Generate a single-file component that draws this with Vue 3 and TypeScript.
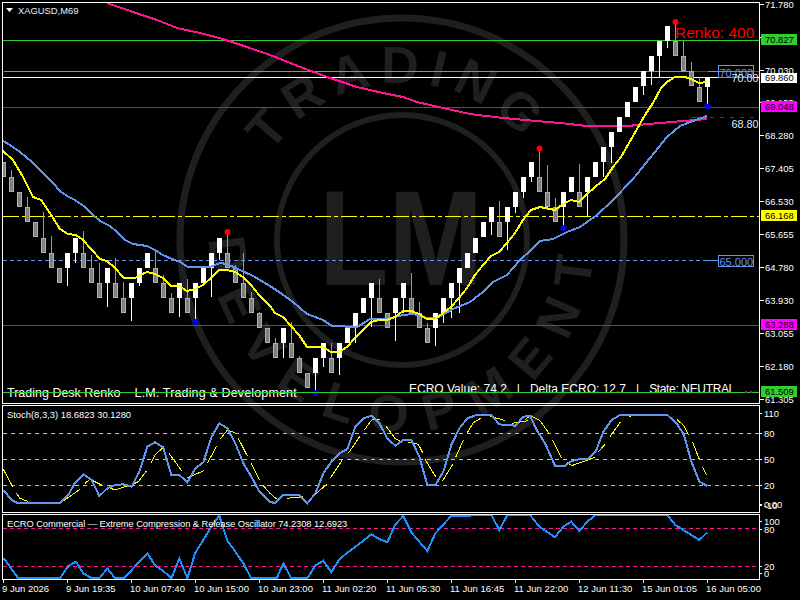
<script setup lang="ts">
type Pt = [number, number]
// [body top, up/down, wick end]
type Bar = [number, 'u' | 'd', number?]

const bars: Bar[] = [
  [162,'d'],[177,'d',170],[192,'d'],[207,'d',197],[222,'d'],[238,'d',212],[253,'d',236],[268,'d'],
  [253,'u',286],[238,'u',263],[253,'d',231],[268,'d',255],[283,'d',263],[268,'u',307],[283,'d',258],[298,'d',282],
  [283,'u',321],[268,'u',286],[253,'u'],[268,'d',250],[283,'d',275],[298,'d',293],[283,'u',317],[298,'d',279],
  [283,'u',320],[268,'u'],[253,'u',297],[238,'u',260],[253,'d',233],[268,'d',265],[283,'d',253],[298,'d',292],
  [313,'d',312],[328,'d'],[343,'d',338],[328,'u',358],[343,'d',322],[358,'d',356],[373,'d'],[358,'u',392],
  [343,'u',367],[358,'d',343],[343,'u',375],[328,'u'],[313,'u',343],[298,'u'],[283,'u',327],[298,'d',279],
  [313,'d'],[298,'u',341],[283,'u',313],[298,'d',273],[313,'d',302],[328,'d',323],[313,'u',346],[298,'u',323],
  [283,'u',318],[268,'u',313],[253,'u'],[238,'u'],[222,'u'],[207,'u',235],[222,'d',201],[207,'u',250],
  [192,'u',213],[177,'u',198],[162,'u',182],[177,'d',149],[192,'d',165],[207,'d',198],[192,'u',228],[177,'u'],
  [192,'d',164],[177,'u',216],[162,'u'],[147,'u',177],[132,'u',163],[117,'u'],[102,'u'],[87,'u'],
  [71,'u',95],[56,'u',85],[41,'u',77],[26,'u',48],[41,'d',22],[56,'d',41],[71,'d',62],[87,'d',77],[77,'u',106],
]

const candles = bars.map(([top, dir, wick], i) => {
  const x = 3 + 8 * i
  return { x, top, up: dir === 'u', wick, h: top === 77 ? 10 : 15 }
})

const yellowMa: Pt[] = [[3,151],[13,160],[23,177],[33,197],[41,200],[50,213],[60,229],[68,234],[76,235],[83,240],[92,250],[100,259],[107,261],[115,268],[124,278],[135,278],[140,275],[147,272],[155,274],[163,278],[171,286],[179,286],[187,291],[195,289],[203,285],[211,278],[219,270],[227,270],[235,272],[243,277],[251,285],[259,295],[270,306],[275,313],[283,317],[291,326],[299,335],[307,347],[323,347],[331,352],[339,352],[347,347],[355,338],[363,330],[371,322],[379,320],[387,320],[395,317],[403,311],[411,311],[419,314],[427,319],[435,319],[443,313],[451,307],[459,298],[467,288],[475,275],[483,265],[491,256],[499,252],[507,243],[515,233],[523,220],[531,210],[540,207],[555,210],[563,204],[571,200],[579,202],[587,194],[595,187],[605,179],[613,167],[621,157],[629,143],[637,129],[645,115],[653,103],[661,88],[667,82],[675,77],[685,77],[691,79],[699,83],[707,82]]
const blueMa: Pt[] = [[3,141],[10,145],[20,152],[32,162],[43,173],[53,183],[60,191],[67,196],[75,200],[85,207],[93,215],[100,221],[110,226],[117,232],[125,240],[133,244],[147,246],[155,250],[163,255],[172,259],[180,262],[188,267],[210,267],[220,263],[227,264],[240,270],[253,276],[270,286],[282,294],[293,302],[307,314],[323,320],[332,326],[357,327],[370,319],[387,319],[403,315],[413,314],[427,318],[437,318],[453,309],[470,302],[483,292],[493,282],[507,275],[520,260],[530,251],[540,241],[553,239],[567,232],[580,227],[597,215],[613,200],[633,179],[650,158],[667,137],[680,126],[693,121],[707,116]]
const pinkMa: Pt[] = [[107,3],[133,12],[157,20],[177,28],[200,33],[223,39],[247,47],[270,55],[303,68],[330,78],[357,87],[383,93],[403,97],[417,102],[443,108],[470,114],[503,118],[547,122],[560,123],[587,126],[627,126],[660,123],[683,121],[707,119]]

// zoomed pick-ups are 3x, these helpers bring them back to page pixels
const scaled = (pts: number[][], ox: number): Pt[] => pts.map(([x, y]) => [ox + x / 3, 400 + y / 3])

const stochMain: Pt[] = [
  ...scaled([[10,270],[35,300],[50,308],[180,308],[205,285],[225,248],[250,223],[275,240],[298,288],[322,265],[345,255],[370,253],[395,260],[418,215],[442,140],[465,127],[490,143],[514,225],[538,225],[562,247],[586,205],[610,187],[634,112],[658,70],[682,85],[706,130],[730,190],[754,230],[778,275],[810,305]], 0),
  ...scaled([[15,310],[40,285],[88,285],[112,310],[136,280],[160,220],[184,185],[208,160],[232,147],[256,80],[280,55],[304,47],[328,70],[352,115],[376,137],[400,120],[424,120],[448,170],[472,255],[496,255],[520,215],[544,135],[568,85],[592,55],[620,45],[664,45],[688,73],[712,75],[736,77],[760,50],[785,47]], 270),
  ...scaled([[0,47],[20,90],[45,130],[75,197],[105,197],[125,183],[150,177],[175,177],[197,155],[220,95],[245,60],[270,45],[412,45],[440,70],[462,105],[484,185],[508,245],[532,258]], 530),
]

const stochSignal: Pt[][] = [
  ...[[[10,208],[38,260]],[[50,280],[60,295],[85,305]],[[115,310],[170,310]],[[190,303],[240,268]],[[255,250],[270,238],[305,255]],[[325,262],[345,270],[385,257]],[[400,252],[415,245],[440,212]],[[452,190],[465,165],[492,140]],[[507,160],[545,212]],[[562,233],[612,212]],[[622,190],[650,138]],[[660,118],[682,90],[705,98]],[[715,115],[742,168]],[[754,190],[778,240]],[[788,255],[810,280]]].map(s => scaled(s, 0)),
  ...[[[0,280],[20,297]],[[50,295],[100,290]],[[125,292],[170,253]],[[182,233],[218,178]],[[235,160],[270,108]],[[283,90],[305,60],[330,58]],[[348,78],[375,115],[395,125]],[[415,127],[445,133],[458,158]],[[465,178],[497,230]],[[518,242],[548,193]],[[557,172],[580,120]],[[592,98],[610,68],[632,55]],[[650,45],[705,62]],[[725,70],[775,62]]].map(s => scaled(s, 270)),
  ...[[[-15,60],[0,47],[30,62],[57,100]],[[67,120],[95,175]],[[112,188],[125,197],[195,172]],[[205,155],[225,133]],[[240,110],[272,65]],[[297,50],[310,45],[415,45]],[[440,58],[462,78],[475,105]],[[488,127],[508,178]],[[517,200],[530,225]]].map(s => scaled(s, 530)),
]

const ecroLine: Pt[] = [
  ...scaled([[10,473],[55,535],[180,535],[205,498],[228,485],[250,520],[275,535],[298,535],[322,505],[345,535],[372,535],[395,510],[442,460],[466,497],[490,513],[514,535],[538,475],[562,535],[586,458],[610,420],[634,380],[658,347],[682,422],[706,455],[730,490],[754,535]], 0),
  ...scaled([[20,535],[40,490],[64,535],[112,535],[136,497],[160,482],[184,517],[208,478],[232,458],[256,440],[280,422],[304,403],[328,417],[352,427],[376,373],[400,348],[424,397],[448,425],[472,453],[496,400],[520,373],[544,348],[664,345],[688,390],[712,345],[784,345]], 270),
  ...scaled([[0,345],[28,380],[75,412],[100,380],[124,365],[148,393],[172,365],[197,345],[412,345],[436,375],[460,390],[508,420],[532,397]], 530),
]

const line = (pts: Pt[]) => pts.map(p => p.join(',')).join(' ')

const priceTicks: [string, number][] = [
  ['71.780', 5],['70.905', 38],['70.030', 71],['69.155', 103],['68.280', 136],['67.405', 169],['66.530', 202],
  ['65.655', 235],['64.780', 268],['63.930', 301],['63.055', 334],['62.180', 367],['61.305', 400],
]
const priceTags = [
  { text: '70.827', y: 34, h: 11, bg: '#32cd32' },
  { text: '69.860', y: 73, h: 10, bg: '#fff' },
  { text: '69.048', y: 101, h: 11, bg: '#ff00ff' },
  { text: '66.168', y: 210, h: 11, bg: '#ffff00' },
  { text: '63.288', y: 319, h: 11, bg: '#ff00ff' },
  { text: '61.509', y: 386, h: 11, bg: '#32cd32' },
]
const stochTicks: [string, number][] = [['110', 413],['80', 433],['50', 459],['20', 485],['0.00', 504],['-10', 505]]
const ecroTicks: [string, number][] = [['100', 521],['80', 529],['20', 566],['0', 573]]

const timeLabels = ['9 Jun 2026','9 Jun 19:35','10 Jun 07:40','10 Jun 15:00','10 Jun 23:00','11 Jun 02:20','11 Jun 05:30','11 Jun 16:45','11 Jun 22:00','12 Jun 11:30','15 Jun 01:05','16 Jun 05:00']

const stateText = 'ECRO Value: 74.2   |   Delta ECRO: 12.7   |   '
const stochText = 'Stoch(8,3,3) 18.6823 30.1280'
const ecroText = 'ECRO Commercial \u2014 Extreme Compression & Release Oscillator 74.2308 12.6923'
</script>

<template>
  <div class="terminal">
    <!-- watermark runs under the main and stoch panes -->
    <svg class="watermark" width="800" height="600" viewBox="0 0 800 600">
      <defs>
        <path id="arcTop" d="M 245 240 A 157 157 0 0 1 559 240" />
        <path id="arcBottom" d="M 211 220 A 192 192 0 1 0 593 220" />
      </defs>
      <circle cx="402" cy="240" r="222" class="ring ring-outer" />
      <circle cx="402" cy="240" r="125" class="ring ring-inner" />
      <text class="wm-word">
        <textPath href="#arcTop" startOffset="49%" text-anchor="middle">TRADING</textPath>
      </text>
      <text class="wm-word wm-wide">
        <textPath href="#arcBottom" startOffset="50%" text-anchor="middle">DEVELOPMENT</textPath>
      </text>
      <text class="wm-logo" x="319" y="285" textLength="164" lengthAdjust="spacingAndGlyphs">LM</text>
    </svg>

    <div class="pane pane-main">
      <svg class="plot" width="756" height="400" viewBox="3 3 756 400">
        <!-- levels -->
        <line x1="3" x2="759" y1="40.5" y2="40.5" stroke="#32cd32" />
        <line x1="4" x2="759" y1="71.5" y2="71.5" stroke="#6495ed" />
        <line x1="3" x2="759" y1="77.5" y2="77.5" stroke="#fff" />
        <line x1="3" x2="759" y1="107.5" y2="107.5" stroke="#cc00cc" />
        <line x1="3" x2="759" y1="216.5" y2="216.5" stroke="#ffff00" stroke-dasharray="16 3 4 3" />
        <line x1="3" x2="707" y1="260.5" y2="260.5" stroke="#6495ed" stroke-dasharray="4 3" />
        <line x1="707" x2="718" y1="260.5" y2="260.5" stroke="#6495ed" />
        <line x1="3" x2="759" y1="325.5" y2="325.5" stroke="#cc00cc" />
        <line x1="691" x2="708" y1="71.5" y2="71.5" stroke="#e00000" />
        <line x1="753" x2="759" y1="71.5" y2="71.5" stroke="#e00000" />
        <line x1="691" x2="708" y1="117.5" y2="117.5" stroke="#e00000" />
        <line x1="708" x2="759" y1="117.5" y2="117.5" stroke="#e00000" stroke-dasharray="4 6" stroke-dashoffset="-12" />

        <polyline :points="line(pinkMa)" class="ma" stroke="#ff1493" />

        <!-- renko bricks -->
        <g v-for="c in candles" :key="c.x">
          <line v-if="c.wick" :x1="c.x + 0.5" :x2="c.x + 0.5" :y1="c.top" :y2="c.wick" :stroke="c.up ? '#fff' : '#9a9a9a'" />
          <rect v-if="c.up" :x="c.x - 2" :y="c.top" width="5" :height="c.h" fill="#fff" />
          <rect v-else :x="c.x - 1.5" :y="c.top + 0.5" width="4" :height="c.h - 1" fill="#808080" stroke="#b0b0b0" />
        </g>

        <polyline :points="line(blueMa)" class="ma" stroke="#6495ed" />
        <polyline :points="line(yellowMa)" class="ma" stroke="#ffff00" />

        <circle cx="227.5" cy="232" r="3" fill="#ff0000" />
        <circle cx="539.5" cy="148.5" r="3" fill="#ff0000" />
        <circle cx="675.5" cy="22" r="3" fill="#ff0000" />
        <circle cx="195.5" cy="322" r="3" fill="#0000ff" />
        <circle cx="315.5" cy="393" r="3" fill="#0000ff" />
        <circle cx="563.5" cy="228" r="3" fill="#0000ff" />
        <circle cx="707.5" cy="106.5" r="3" fill="#0000ff" />

        <polygon points="6,8 13,8 9.5,12" fill="#fff" />
        <text class="small symbol" x="18" y="14">XAGUSD,M69</text>
        <text class="renko" x="675" y="38">Renko: 400</text>

        <rect x="718.5" y="65.5" width="35" height="12" fill="none" stroke="#6495ed" />
        <text class="box-text" x="719.5" y="76.5">70.000</text>
        <text class="level-text" x="731.5" y="82">70.00</text>
        <text class="level-text" x="731.5" y="128">68.80</text>
        <rect x="718.5" y="255.5" width="35" height="11" fill="#000" stroke="#6495ed" />
        <text class="box-text" x="719.5" y="265.5">65.000</text>

        <text class="desk" x="7" y="397">Trading Desk Renko <tspan dy="-1.4">–</tspan><tspan dy="1.4" class="desk-tail"> L.M. Trading &amp; Development</tspan></text>
        <svg x="409" y="380" width="330" height="12.5" viewBox="409 380 330 12.5">
          <text class="desk state" x="409" y="393">{{ stateText }}<tspan class="state-tail">State: NEUTRAL</tspan></text>
        </svg>
        <line x1="3" x2="759" y1="392.5" y2="392.5" stroke="#32cd32" />
        <path d="M745 391l2 2M747 391l-2 2M750 391l2 2M752 391l-2 2" stroke="#555" fill="none" />
      </svg>
      <svg class="axis" width="41" height="402" viewBox="759 2 41 402">
        <g v-for="t in priceTicks" :key="t[0]">
          <line x1="760" x2="764" :y1="t[1] - 0.5" :y2="t[1] - 0.5" stroke="#fff" />
          <text class="small" x="765" :y="t[1] + 3">{{ t[0] }}</text>
        </g>
        <g v-for="t in priceTags" :key="t.text">
          <rect x="761" :y="t.y" width="36" :height="t.h" :fill="t.bg" />
          <text class="small tag-text" x="765" :y="t.y + t.h - 2">{{ t.text }}</text>
        </g>
      </svg>
    </div>

    <div class="pane pane-stoch">
      <svg class="plot" width="756" height="106" viewBox="3 406 756 106">
        <line v-for="y in [433, 459, 485]" :key="y" x1="3" x2="759" :y1="y + 0.5" :y2="y + 0.5" stroke="#c0c0c0" stroke-dasharray="4 4" />
        <polyline v-for="(seg, i) in stochSignal" :key="i" :points="line(seg)" class="signal" />
        <polyline :points="line(stochMain)" class="ma" stroke="#6495ed" />
        <text class="small" x="7" y="418">{{ stochText }}</text>
      </svg>
      <svg class="axis" width="41" height="108" viewBox="759 405 41 108">
        <g v-for="t in stochTicks" :key="t[0]">
          <line x1="760" x2="762" :y1="t[1] + 0.5" :y2="t[1] + 0.5" stroke="#fff" />
          <text class="small" x="764" :y="t[1] + 4">{{ t[0] }}</text>
        </g>
      </svg>
    </div>

    <div class="pane pane-ecro">
      <svg class="plot" width="756" height="64" viewBox="3 515 756 64">
        <line v-for="y in [528, 566]" :key="y" x1="3" x2="759" :y1="y + 0.5" :y2="y + 0.5" stroke="#ff1493" stroke-dasharray="4 3" />
        <polyline :points="line(ecroLine)" class="ma" stroke="#1e90ff" />
        <text class="small ecro-title" x="7" y="527">{{ ecroText }}</text>
      </svg>
      <svg class="axis" width="41" height="66" viewBox="759 514 41 66">
        <g v-for="t in ecroTicks" :key="t[0]">
          <line x1="760" x2="762" :y1="t[1] + 0.5" :y2="t[1] + 0.5" stroke="#fff" />
          <text class="small" x="764" :y="t[1] + 4">{{ t[0] }}</text>
        </g>
      </svg>
    </div>

    <div class="time-axis">
      <div v-for="t in timeLabels" :key="t" class="time-cell">{{ t }}</div>
    </div>
  </div>
</template>

<style scoped>
.terminal {
  position: relative;
  width: 800px;
  height: 600px;
  overflow: hidden;
  box-sizing: border-box;
  padding: 2px 0 0 2px;
  background: #000;
  display: flex;
  flex-direction: column;
}

.watermark {
  position: absolute;
  left: 0;
  top: 0;
}

.ring {
  fill: none;
  stroke: #1f1f1f;
}
.ring-outer {
  stroke-width: 7;
}
.ring-inner {
  stroke-width: 6;
}

.wm-word {
  font-family: "Liberation Sans", sans-serif;
  font-weight: 700;
  font-size: 52px;
  letter-spacing: 9px;
  fill: #1f1f1f;
}
.wm-wide {
  letter-spacing: 19px;
}
.wm-logo {
  font-family: "Liberation Sans", sans-serif;
  font-weight: 700;
  font-size: 136px;
  fill: #1f1f1f;
}

.pane {
  position: relative;
  display: flex;
  flex: none;
  width: 798px;
}
.pane-main {
  height: 402px;
  margin-bottom: 1px;
}
.pane-stoch {
  height: 108px;
  margin-bottom: 1px;
}
.pane-ecro {
  height: 66px;
}

.plot {
  display: block;
  box-sizing: content-box;
  flex: none;
  border: 1px solid #fff;
}
.axis {
  display: block;
  flex: none;
  margin-left: -1px;
}

.ma {
  fill: none;
  stroke-width: 2;
  shape-rendering: crispEdges;
}
.signal {
  fill: none;
  stroke: #ffff00;
  shape-rendering: crispEdges;
}

text {
  white-space: pre;
  font-family: "Liberation Sans", Arial, sans-serif;
}
.small {
  font-size: 9.4px;
  fill: #fff;
}
.tag-text {
  fill: #000;
}
.ecro-title {
  letter-spacing: -0.1px;
}
.symbol {
  fill: #e6f2ff;
}
.renko {
  font-size: 15.5px;
  fill: #ff0000;
}
.box-text {
  font-size: 11px;
  fill: #6495ed;
}
.level-text {
  font-size: 10.8px;
  fill: #dcecff;
}
.desk {
  font-size: 12.5px;
  fill: #fff;
}
.desk-tail {
  letter-spacing: 0.15px;
}
.state {
  font-size: 12px;
}
.state-tail {
  letter-spacing: -0.35px;
}

.time-axis {
  display: flex;
  flex: none;
  height: 21px;
}
.time-cell {
  position: relative;
  width: 64px;
  flex: none;
  padding-top: 3px;
  font: 9.5px/12px "Liberation Sans", Arial, sans-serif;
  color: #fff;
  white-space: nowrap;
}
.time-cell::before {
  content: "";
  position: absolute;
  left: 1px;
  top: 0;
  width: 1px;
  height: 3px;
  background: #fff;
}
</style>
